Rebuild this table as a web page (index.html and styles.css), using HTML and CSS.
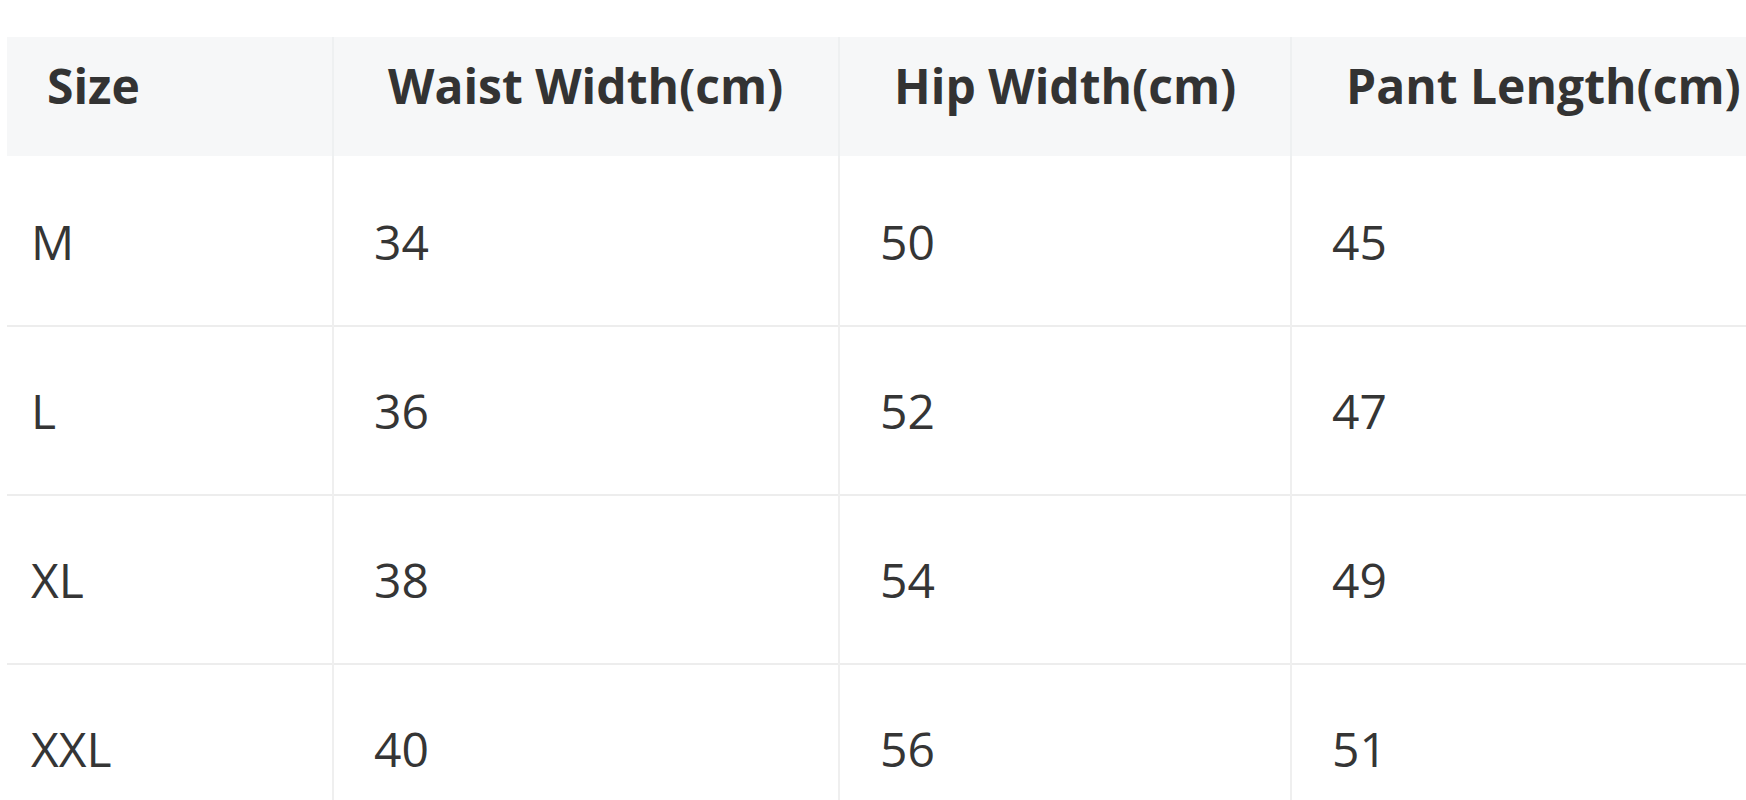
FILE: index.html
```html
<!DOCTYPE html>
<html lang="en">
<head>
<meta charset="utf-8">
<title>Size Chart</title>
<link rel="stylesheet" href="styles.css">
</head>
<body>
<div class="page">
  <table class="size-table">
    <colgroup>
      <col class="c1"><col class="c2"><col class="c3"><col class="c4">
    </colgroup>
    <thead>
      <tr>
        <th class="first">Size</th>
        <th>Waist Width(cm)</th>
        <th>Hip Width(cm)</th>
        <th>Pant Length(cm)</th>
      </tr>
    </thead>
    <tbody>
      <tr><td class="first">M</td><td>34</td><td>50</td><td>45</td></tr>
      <tr><td class="first">L</td><td>36</td><td>52</td><td>47</td></tr>
      <tr><td class="first">XL</td><td>38</td><td>54</td><td>49</td></tr>
      <tr><td class="first">XXL</td><td>40</td><td>56</td><td>51</td></tr>
    </tbody>
  </table>
</div>
</body>
</html>
```

FILE: styles.css
```css
html, body {
  margin: 0;
  padding: 0;
  background: #ffffff;
  overflow: hidden;
}

.page {
  padding: 37px 0 0 7px;
  width: 1800px;
}

.size-table {
  border-collapse: collapse;
  table-layout: fixed;
  width: 1790px;
  font-family: "Open Sans", "Liberation Sans", sans-serif;
  color: #333333;
}

.c1 { width: 326px; }
.c2 { width: 506px; }
.c3 { width: 452px; }
.c4 { width: 506px; }

.size-table th {
  background: #f6f7f8;
  font-weight: 700;
  font-size: 48px;
  line-height: 64px;
  height: 119px;
  box-sizing: border-box;
  padding: 17px 0 38px 54px;
  text-align: left;
  vertical-align: top;
  border-left: 2px solid #eef0f1;
  white-space: nowrap;
}

.size-table th.first {
  padding-left: 40px;
  border-left: none;
}

.size-table td {
  font-weight: 400;
  font-size: 48px;
  line-height: 64px;
  height: 167px;
  box-sizing: border-box;
  padding: 52px 0 51px 40px;
  vertical-align: top;
  border-left: 2px solid #efefef;
  border-top: 2px solid #ededed;
  color: #353535;
}

.size-table tbody tr:first-child td {
  border-top-color: #ffffff;
}

.size-table td.first {
  padding-left: 24px;
  border-left: none;
}
```
